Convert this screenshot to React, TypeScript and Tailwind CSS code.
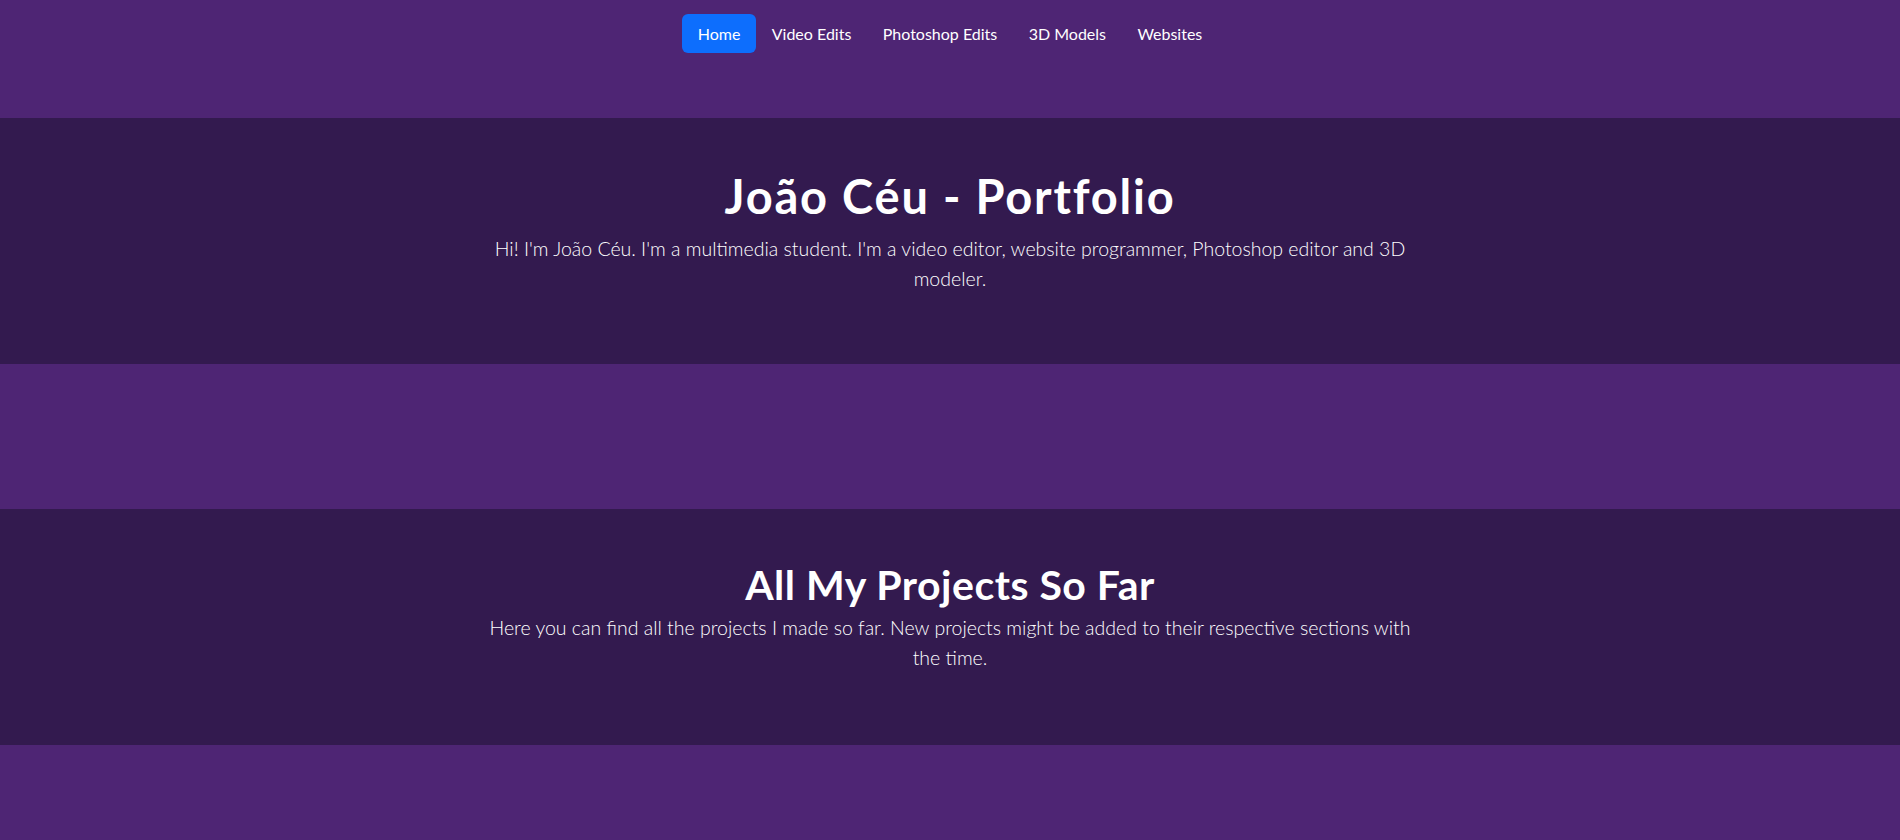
const links = ["Home", "Video Edits", "Photoshop Edits", "3D Models", "Websites"];

export default function App() {
  return (
    <div className="min-h-[840px] bg-[#4e2574] text-white font-['Lato',sans-serif]">
      {/* Nav */}
      <header className="h-[118px] pt-[14px]">
        <nav className="flex justify-center">
          {links.map((l, i) => (
            <a
              key={l}
              href="#"
              className={
                i === 0
                  ? "flex h-[39px] items-center rounded-md bg-[#0d6efd] px-[15.7px] text-[16px] text-white"
                  : "flex h-[39px] items-center px-[15.7px] text-[16px] text-white"
              }
            >
              {l}
            </a>
          ))}
        </nav>
      </header>

      {/* Intro */}
      <section className="bg-[#331a4f] pt-[50px] pb-[70px]">
        <div className="mx-auto max-w-[930px] text-center">
          <h1 className="mb-[10px] text-[47px] leading-[56px] font-bold tracking-[1.8px]">
            João Céu - Portfolio
          </h1>
          <p className="text-[19.5px] leading-[30px] font-light">
            Hi! I'm João Céu. I'm a multimedia student. I'm a video editor, website programmer, Photoshop editor and 3D modeler.
          </p>
        </div>
      </section>

      <div className="h-[145px]" />

      {/* Projects */}
      <section className="bg-[#331a4f] pt-[51px] pb-[72px]">
        <div className="mx-auto max-w-[930px] text-center">
          <h2 className="mb-[4px] text-[41px] leading-[49px] font-bold tracking-[0.5px]">
            All My Projects So Far
          </h2>
          <p className="text-[19.5px] leading-[30px] font-light">
            Here you can find all the projects I made so far. New projects might be added to their respective sections with the time.
          </p>
        </div>
      </section>
    </div>
  );
}
